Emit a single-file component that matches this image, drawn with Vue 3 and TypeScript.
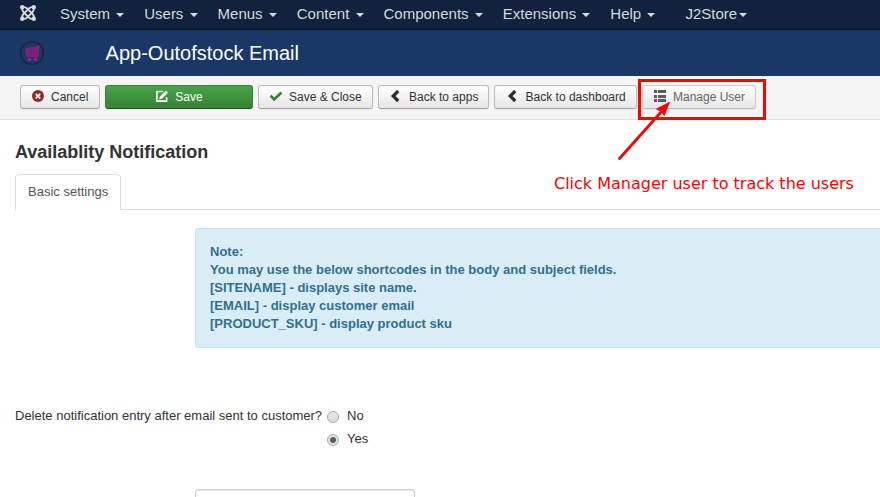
<script setup lang="ts">
import { ref } from 'vue'

interface MenuItem {
  label: string
  tight?: boolean
}

interface ToolbarButton {
  label: string
  icon: 'cancel' | 'edit' | 'check' | 'back' | 'list'
  kind: string
}

const menu: MenuItem[] = [
  { label: 'System' },
  { label: 'Users' },
  { label: 'Menus' },
  { label: 'Content' },
  { label: 'Components' },
  { label: 'Extensions' },
  { label: 'Help' },
  { label: 'J2Store', tight: true },
]

const buttons: ToolbarButton[] = [
  { label: 'Cancel', icon: 'cancel', kind: 'cancel' },
  { label: 'Save', icon: 'edit', kind: 'success' },
  { label: 'Save & Close', icon: 'check', kind: 'close' },
  { label: 'Back to apps', icon: 'back', kind: 'apps' },
  { label: 'Back to dashboard', icon: 'back', kind: 'dashboard' },
  { label: 'Manage User', icon: 'list', kind: 'manage' },
]

const notes: string[] = [
  'Note:',
  'You may use the below shortcodes in the body and subject fields.',
  '[SITENAME] - displays site name.',
  '[EMAIL] - display customer email',
  '[PRODUCT_SKU] - display product sku',
]

const options = ['No', 'Yes']
const selected = ref('Yes')
const subject = ref('')
</script>

<template>
  <div class="page">
    <nav class="navbar">
      <svg class="joomla" viewBox="0 0 16 16" fill="none" stroke="#d9d9d9">
        <g stroke-width="1.9">
          <path d="M2.4 2.4Q5.2 1.6 7 3.4L12.6 9Q14.4 10.8 13.6 13.6" />
          <path d="M2.4 2.4Q1.6 5.2 3.4 7L9 12.6Q10.8 14.4 13.6 13.6" />
          <path d="M13.6 2.4Q10.8 1.6 9 3.4L3.4 9Q1.6 10.8 2.4 13.6" />
          <path d="M13.6 2.4Q14.4 5.2 12.6 7L7 12.6Q5.2 14.4 2.4 13.6" />
        </g>
        <g fill="#d9d9d9" stroke="none">
          <circle cx="2.2" cy="2.2" r="2.2" />
          <circle cx="13.8" cy="2.2" r="2.2" />
          <circle cx="2.2" cy="13.8" r="2.2" />
          <circle cx="13.8" cy="13.8" r="2.2" />
        </g>
      </svg>
      <a v-for="item in menu" :key="item.label" class="menu-item" :class="{ tight: item.tight }">
        {{ item.label }}<span class="caret"></span>
      </a>
    </nav>

    <header class="header">
      <svg class="cart" viewBox="0 0 26 26">
        <circle cx="12" cy="13" r="11.4" fill="none" stroke="#1b232e" stroke-width="1.4" />
        <path d="M5 8.6L15.5 7L16.5 5.8L19.4 5.2L18.6 14.6L17.6 17H7.4L6.4 15.4Z" fill="#941b80" />
        <path d="M6 11H18.5M6.3 13.6H18.2M8.8 8.6V16M11.4 8.2V16M14 7.8V16M16.6 7V16" stroke="#57286f" stroke-width=".6" />
        <rect x="8" y="18" width="3.2" height="3" rx=".7" fill="#a9197f" />
        <rect x="13.8" y="18" width="3.2" height="3" rx=".7" fill="#a9197f" />
      </svg>
      <h1>App-Outofstock Email</h1>
    </header>

    <div class="toolbar">
      <button v-for="b in buttons" :key="b.label" type="button" class="btn" :class="b.kind">
        <svg v-if="b.icon === 'cancel'" class="icon" viewBox="0 0 14 14">
          <circle cx="7" cy="6.1" r="6" fill="#942a25" />
          <path d="M4.8 3.9L9.2 8.3M9.2 3.9L4.8 8.3" stroke="#fff" stroke-width="1.9" />
        </svg>
        <svg v-else-if="b.icon === 'edit'" class="icon" viewBox="0 0 14 14">
          <path d="M8 1.5H1.9V11.2H11.6V7.2" fill="none" stroke="#fff" stroke-width="1.7" />
          <path d="M4.2 9.4L4.8 6.7L10.9 .6L13 2.7L6.9 8.8Z" fill="#fff" />
        </svg>
        <svg v-else-if="b.icon === 'check'" class="icon" viewBox="0 0 14 14">
          <path d="M1.6 5.8L5.2 9.4L12.4 2.6" fill="none" stroke="#378137" stroke-width="2.8" />
        </svg>
        <svg v-else-if="b.icon === 'back'" class="icon" viewBox="0 0 14 14">
          <path d="M9.2 1L4.2 6L9.2 11" fill="none" stroke="#2d2d2d" stroke-width="3.2" />
        </svg>
        <svg v-else class="icon" viewBox="0 0 14 14">
          <path d="M1 0H4V3H1ZM5 0H13V3H5ZM1 5H4V8H1ZM5 5H13V8H5ZM1 9H4V12H1ZM5 9H13V12H5Z" fill="#5b5b5b" />
        </svg>
        <span>{{ b.label }}</span>
      </button>
    </div>

    <main class="content">
      <h2>Availablity Notification</h2>
      <div class="tabs"><a class="tab">Basic settings</a></div>
      <div class="alert">
        <p v-for="line in notes" :key="line">{{ line }}</p>
      </div>
      <div class="field">
        <span class="label">Delete notification entry after email sent to customer?</span>
        <div class="radios">
          <label v-for="o in options" :key="o" class="radio">
            <input v-model="selected" type="radio" name="delete-entry" :value="o" />
            <span>{{ o }}</span>
          </label>
        </div>
      </div>
      <input v-model="subject" class="text-input" type="text" />
    </main>

    <div class="highlight"></div>
    <svg class="arrow" viewBox="0 0 60 64">
      <path d="M4.5 60.5L47 13" stroke="#f00" stroke-width="2.8" stroke-linecap="round" />
      <path d="M55.2 3.5L49.3 18.2L45.8 13.6L40.6 11Z" fill="#f00" />
    </svg>
    <div class="annotation">Click Manager user to track the users</div>
  </div>
</template>

<style>
body {
  margin: 0;
  background: #fff;
}
</style>

<style scoped>
.page {
  position: relative;
  width: 880px;
  height: 497px;
  overflow: hidden;
  font-family: "Liberation Sans", Arial, sans-serif;
  font-size: 13px;
  line-height: 18px;
  color: #333;
}
.navbar {
  box-sizing: border-box;
  height: 30px;
  display: flex;
  align-items: center;
  padding: 0 0 1px 20px;
  background: #10223e;
  border-bottom: 1px solid #0b182c;
}
.joomla {
  width: 16px;
  height: 16px;
  margin: 0 24px 2px 0;
}
.menu-item {
  display: flex;
  align-items: center;
  margin-right: 20px;
  font-size: 15px;
  color: #d9d9d9;
}
.caret {
  margin: 2px 0 0 6.2px;
  border: 4px solid transparent;
  border-top-color: #d9d9d9;
  border-bottom: 0;
}
.tight {
  margin-left: 10px;
}
.tight .caret {
  margin-left: 2px;
}
.header {
  height: 46px;
  display: flex;
  align-items: center;
  padding-left: 20px;
  background: #1a3867;
}
.cart {
  width: 26px;
  height: 26px;
}
h1 {
  margin: 0 0 0 59.6px;
  font-size: 20px;
  font-weight: normal;
  line-height: 30px;
  color: #fff;
}
.toolbar {
  box-sizing: border-box;
  height: 44px;
  display: flex;
  gap: 5px;
  padding: 9px 0 0 20px;
  background: #f5f5f5;
  border-bottom: 1px solid #e3e3e3;
}
.btn {
  box-sizing: border-box;
  height: 24px;
  display: flex;
  align-items: center;
  padding: 0 0 0 10px;
  border: 1px solid #bbb;
  border-bottom-color: #a2a2a2;
  border-radius: 3px;
  background: linear-gradient(#fff, #e6e6e6);
  box-shadow: 0 1px 2px rgba(0, 0, 0, 0.05);
  font: 12px/18px "Liberation Sans", Arial, sans-serif;
  color: #333;
  white-space: nowrap;
}
.icon {
  width: 14px;
  height: 14px;
  margin: 0 6px 0 0;
}
.cancel { width: 80px; }
.success {
  width: 148px;
  justify-content: center;
  padding: 0;
  border-color: #378137 #378137 #204b20;
  background: linear-gradient(#46a546, #378137);
  color: #fff;
}
.close { width: 115px; }
.apps { width: 111px; }
.dashboard {
  width: 143px;
  padding-left: 10.6px;
}
.manage {
  width: 114px;
  border-color: #ccc #ccc #b9b9b9;
  color: #666;
}
.content {
  padding-left: 15px;
}
h2 {
  margin: 0;
  padding-top: 14px;
  font-size: 18px;
  line-height: 36px;
}
.tabs {
  height: 35px;
  margin-top: 4px;
  display: flex;
  border-bottom: 1px solid #ddd;
}
.tab {
  box-sizing: border-box;
  width: 106px;
  height: 36px;
  padding: 8px 12px;
  border: 1px solid #ddd;
  border-bottom: 0;
  border-radius: 4px 4px 0 0;
  background: #fff;
  color: #555;
  white-space: nowrap;
}
.alert {
  box-sizing: border-box;
  height: 120px;
  margin: 18px 0 0 180px;
  padding: 14px;
  border: 1px solid #bce8f1;
  border-right: 0;
  border-radius: 4px 0 0 4px;
  background: #d9edf7;
  color: #31708f;
  font-weight: bold;
}
.alert p {
  margin: 0;
}
.field {
  height: 46px;
  margin-top: 59px;
  display: flex;
}
.label {
  width: 312px;
  white-space: nowrap;
}
.radios {
  display: flex;
  flex-direction: column;
  gap: 5px;
}
.radio {
  display: flex;
  gap: 8px;
}
.radio input {
  appearance: none;
  box-sizing: border-box;
  width: 12px;
  height: 12px;
  margin: 4px 0 0;
  border: 1px solid #a5a5a5;
  border-radius: 50%;
  background: linear-gradient(#ededed, #dcdcdc);
}
.radio input:checked {
  background: radial-gradient(circle, #606060 0 2.7px, #e4e4e4 3.3px);
}
.text-input {
  box-sizing: border-box;
  display: block;
  width: 220px;
  height: 28px;
  margin: 36px 0 0 180px;
  border: 1px solid #ccc;
  border-radius: 3px;
  box-shadow: inset 0 1px 1px rgba(0, 0, 0, 0.075);
}
.highlight {
  position: absolute;
  left: 638px;
  top: 79px;
  box-sizing: border-box;
  width: 128px;
  height: 41px;
  border: 3px solid #f00;
}
.arrow {
  position: absolute;
  left: 615px;
  top: 98px;
  width: 60px;
  height: 64px;
}
.annotation {
  position: absolute;
  left: 554px;
  top: 175px;
  font-family: "DejaVu Sans", sans-serif;
  font-size: 16px;
  color: #f00;
  white-space: nowrap;
}
</style>
